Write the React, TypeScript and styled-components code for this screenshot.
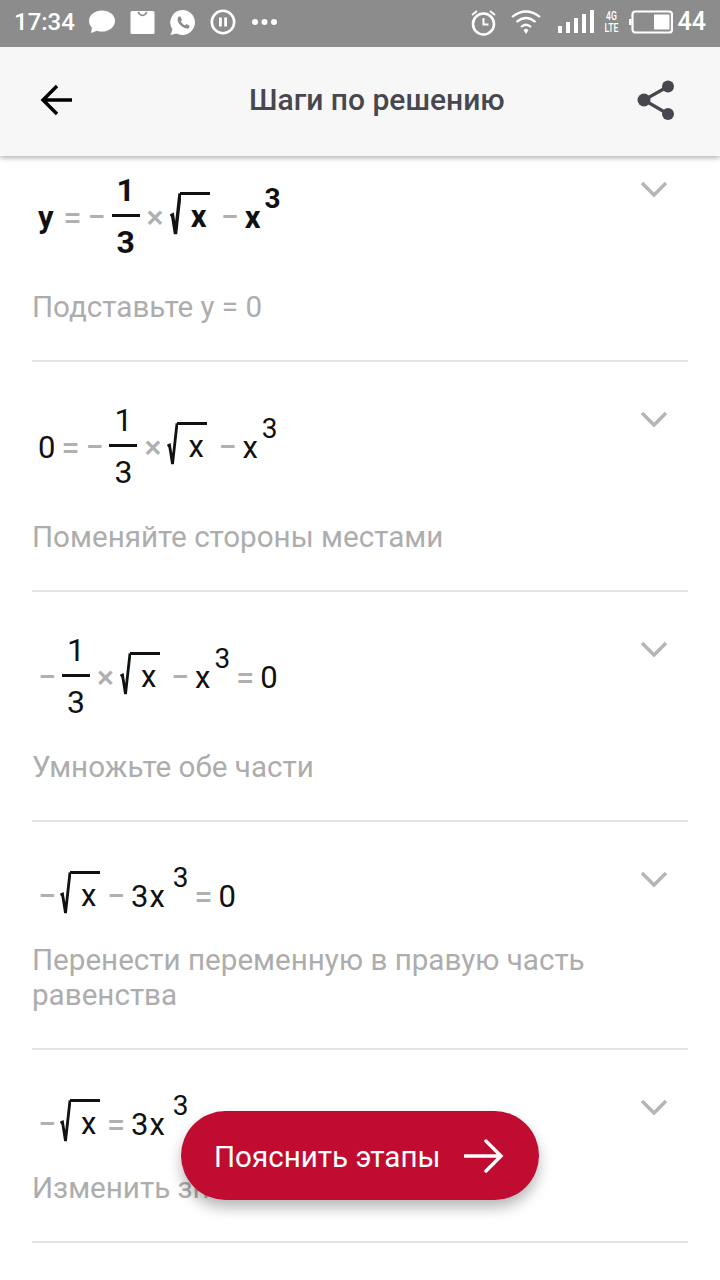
import React, { FunctionComponent } from "react";
import styled, { createGlobalStyle } from "styled-components";

const GlobalStyle = createGlobalStyle`
  html, body {
    margin: 0;
    padding: 0;
    background: #fff;
    font-family: Roboto, "Noto Sans", sans-serif;
  }
`;

const Page = styled.div`
  position: relative;
  width: 720px;
  height: 1280px;
  overflow: hidden;
  background: #fff;
`;

const StatusBar = styled.div`
  position: relative;
  z-index: 3;
  height: 47px;
  display: flex;
  align-items: center;
  padding: 0 14px 3px;
  box-sizing: border-box;
  background: #8c8c8c;
  color: #fff;
`;

const StatusText = styled.span<{ $size: number; $left?: number }>`
  font-size: ${(p) => p.$size}px;
  font-weight: 500;
  line-height: 44px;
  margin-left: ${(p) => p.$left ?? 0}px;
`;

const StatusIcon = styled.svg<{ $left?: number }>`
  display: block;
  flex: none;
  margin-left: ${(p) => p.$left ?? 0}px;
`;

const NetLabel = styled.div`
  display: flex;
  flex-direction: column;
  align-items: center;
  margin-left: 10px;
  width: 15px;
  font-size: 12px;
  line-height: 12px;
  font-weight: 500;
  transform: scaleX(0.72);
`;

const Spacer = styled.div`
  flex: 1;
`;

const Header = styled.header`
  position: relative;
  z-index: 2;
  height: 109px;
  display: flex;
  align-items: center;
  padding: 0 45px 3px 40px;
  box-sizing: border-box;
  background: #f7f7f7;
  box-shadow: 0 2px 5px rgba(0, 0, 0, 0.3);
`;

const Title = styled.h1`
  margin: 0 0 0 177px;
  font-size: 30px;
  font-weight: 500;
  color: #47474f;
  line-height: 36px;
`;

const List = styled.div`
  margin-top: -24px;
  padding: 0 32px;
`;

const Step = styled.section`
  border-bottom: 2px solid #e3e3e3;
  padding-bottom: 35px;
`;

const StepTop = styled.div<{ $tall?: boolean }>`
  display: flex;
  justify-content: space-between;
  height: ${(p) => (p.$tall ? 158 : 121)}px;
`;

const Formula = styled.div<{ $bold?: boolean; $center: number }>`
  display: flex;
  align-items: center;
  gap: 6px;
  height: ${(p) => p.$center * 2}px;
  padding-left: 6px;
  font-size: 31px;
  color: #111;
  font-weight: ${(p) => (p.$bold ? 700 : 400)};
`;

const Lead = styled.span`
  margin-right: 4px;
`;

const Op = styled.span`
  color: #b0b0b0;
  font-weight: 500;
  font-size: 32px;
`;

const Fraction = styled.span`
  display: flex;
  flex-direction: column;
  align-items: center;
  width: 28px;
  font-size: 32px;
  line-height: 36px;
  margin: 0 1px 3px 0;
`;

const FractionBar = styled.span`
  align-self: stretch;
  height: 3px;
  margin: 6px 0 7px;
  background: #111;
`;

const Root = styled.span<{ $tight?: boolean }>`
  display: flex;
  align-items: flex-start;
  height: 50px;
  margin: ${(p) => (p.$tight ? "0 1px 0 -2px" : "0 5px 0 0")};
`;

const Radicand = styled.span`
  width: 30px;
  box-sizing: border-box;
  padding: 5px 0 0 11px;
  border-top: 3px solid #111;
  line-height: 34px;
  margin-left: -1px;
`;

const Coefficient = styled.span`
  letter-spacing: 1px;
  margin-right: 3px;
`;

const Sup = styled.sup`
  font-size: 28px;
  line-height: 30px;
  margin: 0 0 36px -2px;
  vertical-align: baseline;
  font-weight: inherit;
`;

const Chevron = styled.svg`
  flex: none;
  margin: 48px 20px 0 0;
`;

const Description = styled.p`
  margin: 0;
  font-size: 29.6px;
  line-height: 35px;
  color: #adadad;
`;

const ExplainButton = styled.button`
  position: absolute;
  left: 181px;
  top: 1111px;
  width: 358px;
  height: 89px;
  display: flex;
  align-items: center;
  justify-content: space-between;
  padding: 0 35px 0 33px;
  box-sizing: border-box;
  border: 0;
  border-radius: 45px;
  background: #c10c32;
  color: #fff;
  font-family: Roboto, sans-serif;
  font-size: 29.6px;
  box-shadow: 0 8px 14px rgba(0, 0, 0, 0.28);
`;

const ButtonLabel = styled.span`
  margin-top: 2px;
`;

const RootSign: FunctionComponent<{ bold?: boolean; tight?: boolean }> = ({ bold, tight }) => (
  <Root $tight={tight}>
    <svg width="11" height="46" viewBox="0 0 11 46" style={{ display: "block" }}>
      <path
        d="M0.5 24 L2.5 23 L5.5 42 L10 1.5"
        fill="none"
        stroke="#111"
        strokeWidth={bold ? 3.4 : 2.8}
      />
    </svg>
    <Radicand>x</Radicand>
  </Root>
);

const OneThird = () => (
  <Fraction>
    <span>1</span>
    <FractionBar />
    <span>3</span>
  </Fraction>
);

function ChevronIcon() {
  return (
    <Chevron width="28" height="18" viewBox="0 0 28 18">
      <path d="M2 3 L14 15 L26 3" fill="none" stroke="#b5b5b5" strokeWidth="3.4" />
    </Chevron>
  );
}

const Steps = () => (
  <List>
    <Step>
      <StepTop $tall>
        <Formula $bold $center={85}>
          <Lead>y</Lead>
          <Op>=</Op>
          <Op>−</Op>
          <OneThird />
          <Op>×</Op>
          <RootSign bold />
          <Op>−</Op>
          <span>x</span>
          <Sup>3</Sup>
        </Formula>
        <ChevronIcon />
      </StepTop>
      <Description>Подставьте y = 0</Description>
    </Step>
    <Step>
      <StepTop $tall>
        <Formula $center={85}>
          <span>0</span>
          <Op>=</Op>
          <Op>−</Op>
          <OneThird />
          <Op>×</Op>
          <RootSign />
          <Op>−</Op>
          <span>x</span>
          <Sup>3</Sup>
        </Formula>
        <ChevronIcon />
      </StepTop>
      <Description>Поменяйте стороны местами</Description>
    </Step>
    <Step>
      <StepTop $tall>
        <Formula $center={85}>
          <Op>−</Op>
          <OneThird />
          <Op>×</Op>
          <RootSign />
          <Op>−</Op>
          <span>x</span>
          <Sup>3</Sup>
          <Op>=</Op>
          <span>0</span>
        </Formula>
        <ChevronIcon />
      </StepTop>
      <Description>Умножьте обе части</Description>
    </Step>
    <Step>
      <StepTop>
        <Formula $center={74}>
          <Op>−</Op>
          <RootSign tight />
          <Op>−</Op>
          <Coefficient>3x</Coefficient>
          <Sup>3</Sup>
          <Op>=</Op>
          <span>0</span>
        </Formula>
        <ChevronIcon />
      </StepTop>
      <Description>
        Перенести переменную в правую часть
        <br />
        равенства
      </Description>
    </Step>
    <Step>
      <StepTop>
        <Formula $center={74}>
          <Op>−</Op>
          <RootSign tight />
          <Op>=</Op>
          <Coefficient>3x</Coefficient>
          <Sup>3</Sup>
        </Formula>
        <ChevronIcon />
      </StepTop>
      <Description>Изменить знак</Description>
    </Step>
  </List>
);

const App: FunctionComponent = () => {
  return (
    <Page>
      <GlobalStyle />
      <StatusBar>
        <StatusText $size={24}>17:34</StatusText>
        <StatusIcon $left={13} width="27" height="25" viewBox="0 0 27 25">
          <ellipse cx="14" cy="11" rx="13" ry="10.5" fill="#fff" />
          <path d="M4 17 L3 23 L11 20 Z" fill="#fff" />
        </StatusIcon>
        <StatusIcon $left={15} width="25" height="25" viewBox="0 0 25 25">
          <rect x="0.5" y="1" width="24" height="23" rx="1.5" fill="#fff" />
          <path d="M8 2 Q12.5 9 17 2" fill="none" stroke="#8c8c8c" strokeWidth="1.4" />
        </StatusIcon>
        <StatusIcon $left={14} width="27" height="27" viewBox="0 0 27 27">
          <path d="M13.5 1 A12.5 12.5 0 1 1 7.5 24.5 L1.5 26 L3.5 20.5 A12.5 12.5 0 0 1 13.5 1 Z" fill="#fff" />
          <path
            d="M9.5 7.5 L11.5 7.5 L13 11 L11.8 12.5 Q13.5 15.5 16 16.5 L17.5 15 L20.5 16.7 L20 19 Q17 20.5 13 17.5 Q8.5 14 8.5 10 Z"
            fill="#8c8c8c"
          />
        </StatusIcon>
        <StatusIcon $left={14} width="26" height="26" viewBox="0 0 26 26">
          <circle cx="13" cy="13" r="11.2" fill="none" stroke="#fff" strokeWidth="2.6" />
          <rect x="9" y="8.5" width="2.8" height="9" fill="#fff" />
          <rect x="14.2" y="8.5" width="2.8" height="9" fill="#fff" />
        </StatusIcon>
        <StatusIcon $left={15} width="27" height="8" viewBox="0 0 27 8">
          <circle cx="4" cy="4" r="3" fill="#fff" />
          <circle cx="13.5" cy="4" r="3" fill="#fff" />
          <circle cx="23" cy="4" r="3" fill="#fff" />
        </StatusIcon>
        <Spacer />
        <StatusIcon width="27" height="27" viewBox="0 0 27 27">
          <circle cx="13.5" cy="15" r="10.5" fill="none" stroke="#fff" strokeWidth="2.6" />
          <path d="M13.5 9 V15.5 H18.5" fill="none" stroke="#fff" strokeWidth="2" />
          <path d="M2 6 L7 2 M25 6 L20 2" stroke="#fff" strokeWidth="2" />
        </StatusIcon>
        <StatusIcon $left={14} width="30" height="26" viewBox="0 0 30 26">
          <path d="M1 8 Q15 -3 29 8" fill="none" stroke="#fff" strokeWidth="2.2" />
          <path d="M5.5 13 Q15 5 24.5 13" fill="none" stroke="#fff" strokeWidth="2.2" />
          <path d="M10 18 Q15 13.5 20 18" fill="none" stroke="#fff" strokeWidth="2.2" />
          <path d="M12.5 21 L15 19.5 L17.5 21 L15 25 Z" fill="#fff" />
        </StatusIcon>
        <StatusIcon $left={17} width="36" height="24" viewBox="0 0 36 24">
          <rect x="0" y="16" width="4" height="7" fill="#fff" />
          <rect x="8" y="12" width="4" height="11" fill="#fff" />
          <rect x="16" y="8" width="4" height="15" fill="#fff" />
          <rect x="24" y="4" width="4" height="19" fill="#fff" />
          <rect x="32" y="0" width="4" height="23" fill="#fff" />
        </StatusIcon>
        <NetLabel>
          <span>4G</span>
          <span>LTE</span>
        </NetLabel>
        <StatusIcon $left={10} width="44" height="24" viewBox="0 0 44 24">
          <rect x="0" y="9" width="2.5" height="6" fill="#fff" />
          <rect x="3.5" y="1.5" width="39.5" height="21" rx="3" fill="none" stroke="#fff" strokeWidth="2.2" />
          <rect x="25" y="4.5" width="15.5" height="15" fill="#fff" />
        </StatusIcon>
        <StatusText $size={25} $left={5}>44</StatusText>
      </StatusBar>
      <Header>
        <svg width="32" height="32" viewBox="0 0 32 32">
          <path d="M32 16 H3 M17 2 L3 16 L17 30" fill="none" stroke="#000" strokeWidth="3.4" />
        </svg>
        <Title>Шаги по решению</Title>
        <Spacer />
        <svg width="38" height="40" viewBox="0 0 38 40">
          <circle cx="7" cy="20" r="6.5" fill="#47474f" />
          <circle cx="31" cy="6.5" r="6" fill="#47474f" />
          <circle cx="31" cy="34" r="6" fill="#47474f" />
          <path d="M31 6.5 L7 20 L31 34" fill="none" stroke="#47474f" strokeWidth="3.2" />
        </svg>
      </Header>
      <Steps />
      <ExplainButton>
        <ButtonLabel>Пояснить этапы</ButtonLabel>
        <svg width="40" height="36" viewBox="0 0 40 36">
          <path d="M1 18 H37 M22 3 L37 18 L22 33" fill="none" stroke="#fff" strokeWidth="3.4" strokeLinecap="round" />
        </svg>
      </ExplainButton>
    </Page>
  );
};

export default App;
